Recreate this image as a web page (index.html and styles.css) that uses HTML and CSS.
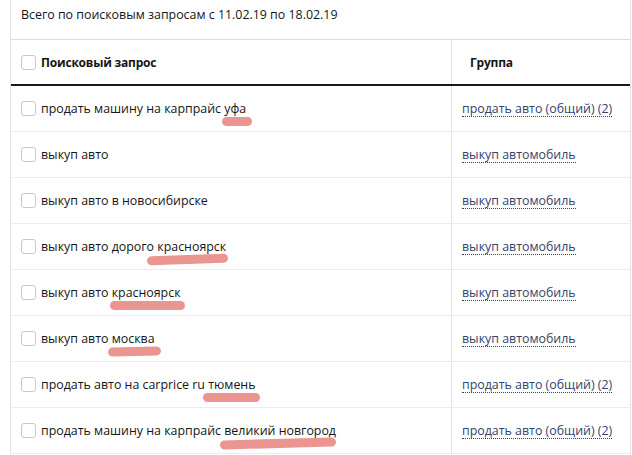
FILE: index.html
```html
<!DOCTYPE html>
<html lang="ru">
<head>
<meta charset="utf-8">
<link rel="stylesheet" href="styles.css">
</head>
<body>
<div class="panel">
  <div class="summary">Всего по поисковым запросам с 11.02.19 по 18.02.19</div>
  <div class="table">
    <div class="row head">
      <div class="cell query"><span class="cb"></span><span>Поисковый запрос</span></div>
      <div class="cell group">Группа</div>
    </div>
    <div class="row">
      <div class="cell query"><span class="cb"></span><span>продать машину на карпрайс <span class="mark m1">уфа</span></span></div>
      <div class="cell group"><a class="link">продать авто (общий) (2)</a></div>
    </div>
    <div class="row">
      <div class="cell query"><span class="cb"></span><span>выкуп авто</span></div>
      <div class="cell group"><a class="link">выкуп автомобиль</a></div>
    </div>
    <div class="row">
      <div class="cell query"><span class="cb"></span><span>выкуп авто в новосибирске</span></div>
      <div class="cell group"><a class="link">выкуп автомобиль</a></div>
    </div>
    <div class="row">
      <div class="cell query"><span class="cb"></span><span>выкуп авто дорого <span class="mark m4">красноярск</span></span></div>
      <div class="cell group"><a class="link">выкуп автомобиль</a></div>
    </div>
    <div class="row">
      <div class="cell query"><span class="cb"></span><span>выкуп авто <span class="mark m5">красноярск</span></span></div>
      <div class="cell group"><a class="link">выкуп автомобиль</a></div>
    </div>
    <div class="row">
      <div class="cell query"><span class="cb"></span><span>выкуп авто <span class="mark m6">москва</span></span></div>
      <div class="cell group"><a class="link">выкуп автомобиль</a></div>
    </div>
    <div class="row">
      <div class="cell query"><span class="cb"></span><span>продать авто на carprice ru <span class="mark m7">тюмень</span></span></div>
      <div class="cell group"><a class="link">продать авто (общий) (2)</a></div>
    </div>
    <div class="row">
      <div class="cell query"><span class="cb"></span><span>продать машину на карпрайс <span class="mark m8">великий новгород</span></span></div>
      <div class="cell group"><a class="link">продать авто (общий) (2)</a></div>
    </div>
  </div>
</div>
</body>
</html>
```
FILE: styles.css
```css
* { box-sizing: border-box; }
html, body { margin: 0; padding: 0; background: #fff; }
body {
  font-family: "Open Sans", "Liberation Sans", sans-serif;
  font-size: 12.4px;
  color: #161616;
  overflow: hidden;
}
.panel {
  margin-left: 10px;
  width: 621px;
  border-left: 1px solid #e3e3e3;
  border-right: 1px solid #e3e3e3;
}
.summary {
  height: 40px;
  padding: 6px 0 0 10px;
  line-height: 18px;
  border-bottom: 1px solid #dcdcdc;
}
.row {
  display: grid;
  grid-template-columns: 440px 1fr;
  height: 46px;
  border-bottom: 1px solid #ececec;
}
.row.head {
  height: 46px;
  border-bottom: 2px solid #1a1a1a;
  font-weight: 700;
  font-size: 12px;
  letter-spacing: -0.2px;
}
.cell {
  display: flex;
  align-items: center;
}
.query {
  padding-left: 10px;
  gap: 5px;
}
.group {
  border-left: 1px solid #e3e3e3;
  padding-left: 10px;
}
.head .group { padding-left: 18px; }
.cb {
  width: 15px;
  height: 15px;
  border: 1px solid #c9c9c9;
  border-radius: 3px;
  flex: none;
  background: #fff;
}
.link {
  color: #33436a;
  text-decoration: none;
  border-bottom: 1px dotted #33436a;
  line-height: 15px;
}
.mark { position: relative; }
.mark::after {
  content: "";
  position: absolute;
  left: var(--l, 0);
  right: var(--r, 0);
  top: 17px;
  height: 9px;
  background: #ea9590;
  border-radius: 5px;
  transform: rotate(var(--rot, 0deg));
}
.m1 { --l: -2px; --r: -6px; }
.m4 { --l: -10px; --r: -2px; --rot: -2deg; }
.m5 { --l: -2px; --r: -4px; }
.m6 { --l: -4px; --r: -6px; --rot: -1.5deg; }
.m7 { --l: -5px; --r: -4px; }
.m8 { --l: -4px; --r: 0px; --rot: -1.5deg; }
```
